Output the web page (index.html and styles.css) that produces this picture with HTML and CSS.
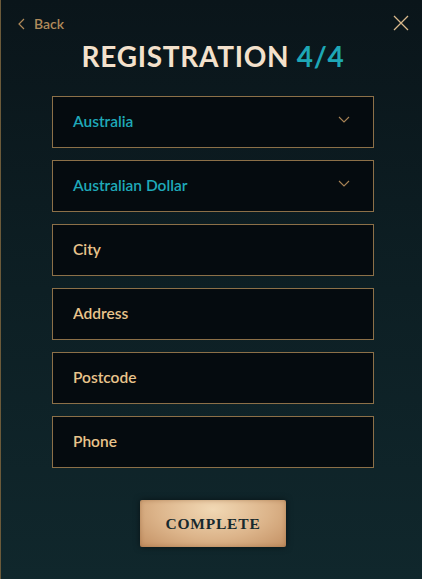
FILE: index.html
```html
<!DOCTYPE html>
<html lang="en">
<head>
    <meta charset="UTF-8">
    <meta name="viewport" content="width=device-width, initial-scale=1.0">
    <title>Registration</title>
    <link rel="stylesheet" href="styles.css">
</head>
<body>
    <div class="modal">
        <div class="top-row">
            <a href="#" class="back">
                <svg width="7" height="12" viewBox="0 0 7 12"><path d="M6 1L1 6l5 5" fill="none" stroke="#b08a5a" stroke-width="1.2"/></svg>
                <span>Back</span>
            </a>
            <a href="#" class="close">
                <svg width="16" height="16" viewBox="0 0 16 16"><path d="M1 1l14 14M15 1L1 15" fill="none" stroke="#d9b98c" stroke-width="1.3"/></svg>
            </a>
        </div>
        <h1 class="title">REGISTRATION <span class="step">4/4</span></h1>
        <form class="form">
            <div class="field select">
                <span class="value">Australia</span>
                <svg class="chevron" width="12" height="7" viewBox="0 0 12 7"><path d="M1 1l5 5 5-5" fill="none" stroke="#a88456" stroke-width="1.1"/></svg>
            </div>
            <div class="field select">
                <span class="value">Australian Dollar</span>
                <svg class="chevron" width="12" height="7" viewBox="0 0 12 7"><path d="M1 1l5 5 5-5" fill="none" stroke="#a88456" stroke-width="1.1"/></svg>
            </div>
            <input class="field" type="text" placeholder="City">
            <input class="field" type="text" placeholder="Address">
            <input class="field" type="text" placeholder="Postcode">
            <input class="field" type="text" placeholder="Phone">
            <button type="button" class="complete">COMPLETE</button>
        </form>
    </div>
</body>
</html>
```

FILE: styles.css
```css
html, body {
    margin: 0;
    height: 100%;
}
body {
    font-family: Lato, "Open Sans", sans-serif;
    background: linear-gradient(to bottom, #0a151a 0%, #0d1f24 50%, #10272c 100%);
    border-left: 1px solid #6b5a3a;
    box-sizing: border-box;
}
.modal {
    padding: 12px 14px 0 17px;
}
.top-row {
    display: flex;
    justify-content: space-between;
    align-items: center;
}
.back {
    display: flex;
    align-items: center;
    gap: 9px;
    color: #b08a5a;
    text-decoration: none;
    font-size: 14px;
    font-weight: 600;
    padding-top: 3px;
}
.close {
    display: flex;
    padding-top: 1px;
    margin-right: -1px;
}
.title {
    margin: 7px 0 0;
    text-align: center;
    font-size: 28px;
    font-weight: 700;
    color: #f3e1cc;
    letter-spacing: 0.7px;
    line-height: 34px;
}
.step {
    color: #1ea7b5;
}
.form {
    display: flex;
    flex-direction: column;
    align-items: center;
    gap: 12px;
    margin-top: 23px;
    margin-left: -14px;
    margin-right: -14px;
}
.field {
    width: 322px;
    height: 52px;
    box-sizing: border-box;
    border: 1px solid #8c7048;
    background-color: #050b0f;
    padding: 0 20px 2px;
    font-family: Lato, "Open Sans", sans-serif;
    font-size: 15.5px;
    font-weight: 600;
    color: #e9c48c;
    outline: none;
}
.field::placeholder {
    color: #e9c48c;
}
.select {
    display: flex;
    align-items: center;
    justify-content: space-between;
    padding-right: 23px;
}
.value {
    color: #1fa9b9;
}
.chevron {
    margin-top: -3px;
}
.complete {
    margin-top: 20px;
    width: 146px;
    height: 47px;
    border: none;
    border-radius: 2px;
    background: radial-gradient(ellipse at 50% 20%, #f1d8b4 0%, #dcb48a 55%, #c39063 100%);
    box-shadow: 0 0 6px rgba(0, 0, 0, 0.5), inset 0 0 4px rgba(120, 70, 30, 0.4);
    font-family: "Liberation Serif", serif;
    font-size: 15.5px;
    font-weight: 700;
    letter-spacing: 0.8px;
    color: #17292d;
    cursor: pointer;
}
```
